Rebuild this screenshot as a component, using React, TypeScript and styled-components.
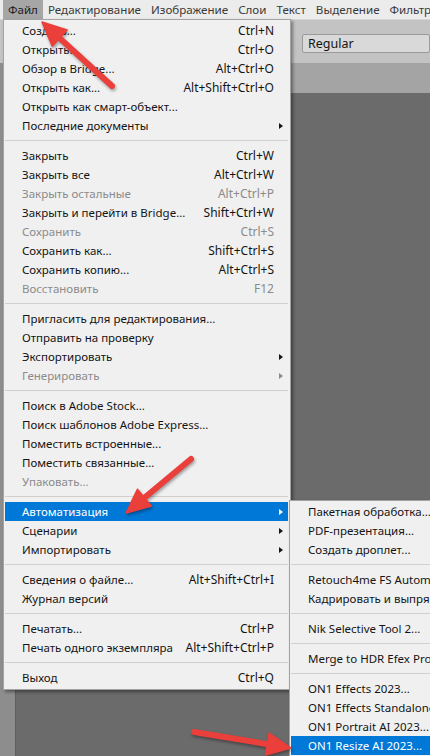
import styled, { createGlobalStyle } from 'styled-components'

// --------------------------------------------------------------------------------------------------------------
const GlobalStyle = createGlobalStyle`
  html, body {
    margin: 0;
    padding: 0;
    background: #6b6b6b;
  }
`

const Screen = styled.div`
  position: relative;
  width: 430px;
  height: 756px;
  overflow: hidden;
  display: flex;
  flex-direction: column;
  font-family: "Noto Sans", "Open Sans", sans-serif;
  font-size: 11.5px;
`

const MenuBar = styled.div`
  display: flex;
  align-items: stretch;
  height: 19px;
  padding-left: 3px;
  background: #ececec;
  white-space: nowrap;
`

const BarItem = styled.div<{ $open?: boolean }>`
  display: flex;
  align-items: center;
  padding: 0 5px;
  color: ${p => (p.$open ? '#1c1c1c' : '#3a3a3a')};
  background: ${p => (p.$open ? '#a6a6a6' : 'transparent')};
  font-size: 11.6px;
`

const OptionsBar = styled.div`
  display: flex;
  align-items: flex-start;
  height: 44px;
  padding: 14px 0 0 302px;
  box-sizing: border-box;
  background: #c3c3c3;
  border-top: 1px solid #d6d6d6;
`

const FontSelect = styled.div`
  width: 160px;
  height: 19px;
  box-sizing: border-box;
  padding-left: 5px;
  display: flex;
  align-items: center;
  background: #d9d9d9;
  border: 1px solid #9a9a9a;
  border-radius: 2px;
  color: #151515;
  font-size: 12.5px;
`

const Workspace = styled.div`
  flex: 1;
  display: flex;
`

const ToolStrip = styled.div`
  width: 15px;
  background: #8d8d8d;
  border-right: 1px solid #5e5e5e;
`

const DocArea = styled.div`
  flex: 1;
  display: flex;
  flex-direction: column;
`

const TabBand = styled.div`
  height: 30px;
  background: #a4a4a4;
`

const Canvas = styled.div`
  flex: 1;
  background: #6b6b6b;
`

const Dropdown = styled.div<{ $top: number; $left: number; $width: number }>`
  position: absolute;
  top: ${p => p.$top}px;
  left: ${p => p.$left}px;
  width: ${p => p.$width}px;
  box-sizing: border-box;
  padding: 1px 2px 2px 1px;
  background: #f0f0f0;
  border: 1px solid #a3a3a3;
  box-shadow: 2px 2px 3px rgba(0, 0, 0, 0.4);
  white-space: nowrap;
`

const Row = styled.div<{ $disabled?: boolean; $active?: boolean }>`
  display: grid;
  grid-template-columns: 1fr auto 14px;
  align-items: center;
  height: 19px;
  padding-left: 17px;
  color: ${p => (p.$active ? '#ffffff' : p.$disabled ? '#8b8b8b' : '#141414')};
  background: ${p => (p.$active ? '#0078d7' : 'transparent')};
`

const Shortcut = styled.span`
  padding-left: 8px;
  font-size: 12px;
`

const SubArrow = styled.span`
  justify-self: center;
  width: 0;
  height: 0;
  border-left: 4px solid currentColor;
  border-top: 3.5px solid transparent;
  border-bottom: 3.5px solid transparent;
`

const Separator = styled.div`
  height: 11px;
  display: flex;
  align-items: center;

  &::after {
    content: '';
    flex: 1;
    height: 1px;
    background: #d0d0d0;
  }
`

const Overlay = styled.svg`
  position: absolute;
  left: 0;
  top: 0;
  pointer-events: none;
  filter: drop-shadow(1px 2px 1.5px rgba(0, 0, 0, 0.35));
`

// --------------------------------------------------------------------------------------------------------------

type Entry = { label?: string; shortcut?: string; disabled?: boolean; sub?: boolean; active?: boolean; sep?: boolean }

const SEP: Entry = { sep: true }

const fileMenu: Entry[] = [
  { label: 'Создать...', shortcut: 'Ctrl+N' },
  { label: 'Открыть...', shortcut: 'Ctrl+O' },
  { label: 'Обзор в Bridge...', shortcut: 'Alt+Ctrl+O' },
  { label: 'Открыть как...', shortcut: 'Alt+Shift+Ctrl+O' },
  { label: 'Открыть как смарт-объект...' },
  { label: 'Последние документы', sub: true },
  SEP,
  { label: 'Закрыть', shortcut: 'Ctrl+W' },
  { label: 'Закрыть все', shortcut: 'Alt+Ctrl+W' },
  { label: 'Закрыть остальные', shortcut: 'Alt+Ctrl+P', disabled: true },
  { label: 'Закрыть и перейти в Bridge...', shortcut: 'Shift+Ctrl+W' },
  { label: 'Сохранить', shortcut: 'Ctrl+S', disabled: true },
  { label: 'Сохранить как...', shortcut: 'Shift+Ctrl+S' },
  { label: 'Сохранить копию...', shortcut: 'Alt+Ctrl+S' },
  { label: 'Восстановить', shortcut: 'F12', disabled: true },
  SEP,
  { label: 'Пригласить для редактирования...' },
  { label: 'Отправить на проверку' },
  { label: 'Экспортировать', sub: true },
  { label: 'Генерировать', sub: true, disabled: true },
  SEP,
  { label: 'Поиск в Adobe Stock...' },
  { label: 'Поиск шаблонов Adobe Express...' },
  { label: 'Поместить встроенные...' },
  { label: 'Поместить связанные...' },
  { label: 'Упаковать...', disabled: true },
  SEP,
  { label: 'Автоматизация', sub: true, active: true },
  { label: 'Сценарии', sub: true },
  { label: 'Импортировать', sub: true },
  SEP,
  { label: 'Сведения о файле...', shortcut: 'Alt+Shift+Ctrl+I' },
  { label: 'Журнал версий' },
  SEP,
  { label: 'Печатать...', shortcut: 'Ctrl+P' },
  { label: 'Печать одного экземпляра', shortcut: 'Alt+Shift+Ctrl+P' },
  SEP,
  { label: 'Выход', shortcut: 'Ctrl+Q' },
]

const automateMenu: Entry[] = [
  { label: 'Пакетная обработка...' },
  { label: 'PDF-презентация...' },
  { label: 'Создать дроплет...' },
  SEP,
  { label: 'Retouch4me FS Automation...' },
  { label: 'Кадрировать и выпрямить фотографии' },
  SEP,
  { label: 'Nik Selective Tool 2...' },
  SEP,
  { label: 'Merge to HDR Efex Pro 2...' },
  SEP,
  { label: 'ON1 Effects 2023...' },
  { label: 'ON1 Effects Standalone 2023...' },
  { label: 'ON1 Portrait AI 2023...' },
  { label: 'ON1 Resize AI 2023...', active: true },
]

const barItems = ['Файл', 'Редактирование', 'Изображение', 'Слои', 'Текст', 'Выделение', 'Фильтр']

// tail -> tip, in page pixels
const arrows = [
  { x1: 112, y1: 86, x2: 42, y2: 22 },
  { x1: 191, y1: 459, x2: 126, y2: 513 },
  { x1: 194, y1: 732, x2: 291, y2: 748 },
]

function MenuList({ items }: { items: Entry[] }) {
  return (
    <>
      {items.map((it, i) =>
        it.sep ? (
          <Separator key={i} />
        ) : (
          <Row key={i} $disabled={it.disabled} $active={it.active}>
            <span>{it.label}</span>
            <Shortcut>{it.shortcut}</Shortcut>
            {it.sub ? <SubArrow /> : <span />}
          </Row>
        )
      )}
    </>
  )
}

function Arrow({ x1, y1, x2, y2 }: { x1: number; y1: number; x2: number; y2: number }) {
  const len = Math.hypot(x2 - x1, y2 - y1)
  const dx = (x2 - x1) / len
  const dy = (y2 - y1) / len
  const head = 24
  const half = 11
  const bx = x2 - dx * head
  const by = y2 - dy * head
  const pts = `${x2},${y2} ${bx - dy * half},${by + dx * half} ${bx + dy * half},${by - dx * half}`
  return (
    <g>
      <line x1={x1} y1={y1} x2={bx + dx * 2} y2={by + dy * 2} stroke="#ea3f3a" strokeWidth={6} strokeLinecap="round" />
      <polygon points={pts} fill="#ea3f3a" stroke="#ea3f3a" strokeWidth={1.5} strokeLinejoin="round" />
    </g>
  )
}

export default function App() {
  return (
    <Screen>
      <GlobalStyle />

      <MenuBar>
        {barItems.map((b, i) => (
          <BarItem key={b} $open={i === 0}>{b}</BarItem>
        ))}
      </MenuBar>

      <OptionsBar>
        <FontSelect>Regular</FontSelect>
      </OptionsBar>

      <Workspace>
        <ToolStrip />
        <DocArea>
          <TabBand />
          <Canvas />
        </DocArea>
      </Workspace>

      <Dropdown $top={19} $left={3} $width={288}>
        <MenuList items={fileMenu} />
      </Dropdown>

      <Dropdown $top={500} $left={289} $width={230}>
        <MenuList items={automateMenu} />
      </Dropdown>

      <Overlay width={430} height={756} viewBox="0 0 430 756">
        {arrows.map((a, i) => (
          <Arrow key={i} {...a} />
        ))}
      </Overlay>
    </Screen>
  )
}
